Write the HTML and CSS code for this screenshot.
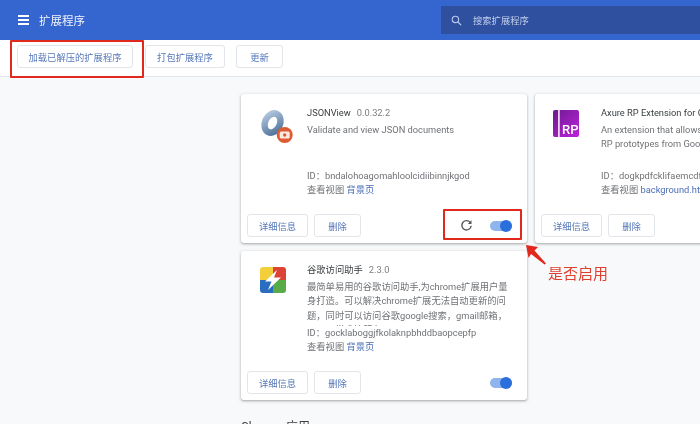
FILE: index.html
```html
<!DOCTYPE html>
<html lang="zh-CN">
<head>
    <meta charset="UTF-8">
    <meta name="viewport" content="width=device-width, initial-scale=1.0">
    <title>扩展程序</title>
    <link rel="stylesheet" href="styles.css">
</head>
<body>
    <div class="page">
        <header class="header">
            <div class="header-left">
                <div class="menu-icon"><span></span><span></span><span></span></div>
                <h1 class="header-title">扩展程序</h1>
            </div>
            <div class="search">
                <svg class="search-icon" viewBox="0 0 12 12" width="11" height="11">
                    <circle cx="4.8" cy="4.8" r="3.5" fill="none" stroke="#b9c9ee" stroke-width="1.2"/>
                    <path d="M7.4 7.4 L11 11" stroke="#b9c9ee" stroke-width="1.3"/>
                </svg>
                <span>搜索扩展程序</span>
            </div>
        </header>

        <div class="toolbar">
            <button class="btn btn-load">加载已解压的扩展程序</button>
            <button class="btn btn-pack">打包扩展程序</button>
            <button class="btn btn-update">更新</button>
        </div>

        <main class="content">
            <div class="cards">
                <section class="card">
                    <div class="card-main">
                        <svg class="card-icon" viewBox="0 0 36 36" width="36" height="36">
                            <defs>
                                <linearGradient id="ring" x1="0" y1="0" x2="1" y2="1">
                                    <stop offset="0" stop-color="#b4c8de"/>
                                    <stop offset="1" stop-color="#4f719b"/>
                                </linearGradient>
                            </defs>
                            <ellipse cx="18.5" cy="15" rx="7.5" ry="10" transform="rotate(25 18.5 15)" fill="none" stroke="url(#ring)" stroke-width="6.5"/>
                            <circle cx="30.7" cy="27" r="8" fill="#dd5b33"/>
                            <rect x="25.7" y="23.5" width="10" height="7" rx="1.5" fill="#fbe9e2"/>
                            <circle cx="30.7" cy="27" r="1.7" fill="#dd5b33"/>
                        </svg>
                        <div class="card-text">
                            <div class="card-title"><span class="name">JSONView</span><span class="version">0.0.32.2</span></div>
                            <div class="desc">Validate and view JSON documents</div>
                            <div class="ext-id">ID：bndalohoagomahloolcidiibinnjkgod</div>
                            <div class="views">查看视图 <a href="#">背景页</a></div>
                        </div>
                    </div>
                    <div class="card-actions">
                        <button class="btn btn-details">详细信息</button>
                        <button class="btn btn-remove">删除</button>
                        <div class="spacer"></div>
                        <svg class="reload" viewBox="0 0 14 14" width="13" height="13">
                            <path d="M11.3 4.2 A5 5 0 1 0 12 7.2" fill="none" stroke="#55585c" stroke-width="1.5"/>
                            <path d="M12.4 1.4 V5.4 H8.4 Z" fill="#55585c"/>
                        </svg>
                        <div class="toggle"><span class="knob"></span></div>
                    </div>
                </section>

                <section class="card">
                    <div class="card-main">
                        <svg class="card-icon" viewBox="0 0 36 36" width="36" height="36">
                            <defs>
                                <linearGradient id="rp" x1="0" y1="0" x2="1" y2="1">
                                    <stop offset="0" stop-color="#6a1b8f"/>
                                    <stop offset="1" stop-color="#c021dc"/>
                                </linearGradient>
                            </defs>
                            <rect x="5" y="2" width="26" height="27" rx="2" fill="url(#rp)"/>
                            <rect x="10" y="2" width="1.8" height="27" fill="#eed3f5"/>
                            <text x="14" y="25.5" class="rp-text">RP</text>
                        </svg>
                        <div class="card-text">
                            <div class="card-title"><span class="name">Axure RP Extension for Chrome</span></div>
                            <div class="desc">An extension that allows you to view Axure<br>RP prototypes from Google Chrome</div>
                            <div class="ext-id">ID：dogkpdfcklifaemcdfbildhcofnopogp</div>
                            <div class="views">查看视图 <a href="#">background.html</a></div>
                        </div>
                    </div>
                    <div class="card-actions">
                        <button class="btn btn-details">详细信息</button>
                        <button class="btn btn-remove">删除</button>
                    </div>
                </section>

                <section class="card">
                    <div class="card-main">
                        <svg class="card-icon" viewBox="0 0 36 36" width="36" height="36">
                            <g transform="translate(1 -3)">
                                <path d="M8 5 H18 V18 H5 V8 A3 3 0 0 1 8 5 Z" fill="#f4cf3c"/>
                                <path d="M18 5 H28 A3 3 0 0 1 31 8 V18 H18 Z" fill="#dd4237"/>
                                <path d="M5 18 H18 V31 H8 A3 3 0 0 1 5 28 Z" fill="#2a6cc0"/>
                                <path d="M18 18 H31 V28 A3 3 0 0 1 28 31 H18 Z" fill="#58ab47"/>
                                <path d="M22 8 L10 19.5 H16.5 L13 28 L26 15.5 H19 Z" fill="#fff"/>
                            </g>
                        </svg>
                        <div class="card-text">
                            <div class="card-title"><span class="name">谷歌访问助手</span><span class="version">2.3.0</span></div>
                            <div class="desc desc-long">最简单易用的谷歌访问助手,为chrome扩展用户量身打造。可以解决chrome扩展无法自动更新的问题，同时可以访问谷歌google搜索，gmail邮箱，google学术等服务。</div>
                            <div class="ext-id">ID：gocklaboggjfkolaknpbhddbaopcepfp</div>
                            <div class="views">查看视图 <a href="#">背景页</a></div>
                        </div>
                    </div>
                    <div class="card-actions">
                        <button class="btn btn-details">详细信息</button>
                        <button class="btn btn-remove">删除</button>
                        <div class="spacer"></div>
                        <div class="toggle"><span class="knob"></span></div>
                    </div>
                </section>
            </div>
            <h2 class="section-title">Chrome 应用</h2>
        </main>

        <!-- annotations drawn on top of the screenshot -->
        <div class="mark mark-load"></div>
        <div class="mark mark-toggle"></div>
        <svg class="arrow" viewBox="0 0 24 24" width="24" height="24">
            <path d="M1 1 L13 3 L9.5 6.5 L21 19.5 L19.5 20.5 L6 10 L3.5 14 Z" fill="#e0281c"/>
        </svg>
        <div class="note">是否启用</div>
    </div>
</body>
</html>
```

FILE: styles.css
```css
* {
    box-sizing: border-box;
}

html, body {
    margin: 0;
    height: 100%;
    overflow: hidden;
}

.page {
    position: relative;
    width: 700px;
    height: 424px;
    overflow: hidden;
    background-color: #f8f9fa;
    font-family: Roboto, "Noto Sans CJK SC", sans-serif;
    filter: blur(0.45px);
}

.header {
    display: flex;
    justify-content: space-between;
    align-items: center;
    height: 40px;
    background-color: #3566cf;
}

.header-left {
    display: flex;
    align-items: center;
    padding-left: 18px;
}

.menu-icon {
    display: flex;
    flex-direction: column;
    gap: 2.5px;
    width: 11px;
    margin-right: 10px;
}

.menu-icon span {
    height: 1.5px;
    background-color: #fff;
}

.header-title {
    margin: 0;
    font-size: 11.5px;
    font-weight: 400;
    color: #f0f4fc;
}

.search {
    display: flex;
    align-items: center;
    width: 259px;
    height: 28px;
    padding-left: 10px;
    background-color: #2f4f9f;
    font-size: 9.3px;
    color: #c3d0ec;
}

.search-icon {
    margin-right: 11px;
}

.toolbar {
    display: flex;
    align-items: center;
    height: 37px;
    padding: 0 0 3px 17px;
    background-color: #fff;
    border-bottom: 1px solid #e3e5e8;
}

.btn {
    height: 23px;
    padding: 0;
    background-color: #fff;
    border: 1px solid #e2e5e9;
    border-radius: 3px;
    font-family: inherit;
    font-size: 9.3px;
    color: #5577b8;
}

.btn-load {
    width: 116px;
    margin-right: 12px;
}

.btn-pack {
    width: 80px;
    margin-right: 11px;
}

.btn-update {
    width: 47px;
}

.content {
    padding: 17px 0 0 241px;
}

.cards {
    display: grid;
    grid-template-columns: repeat(2, 286px);
    grid-auto-rows: 149px;
    gap: 8px;
}

.card {
    display: flex;
    flex-direction: column;
    background-color: #fff;
    border-radius: 3px;
    box-shadow: 0 1px 2px rgba(60, 64, 67, 0.3), 0 1px 3px 1px rgba(60, 64, 67, 0.12);
}

.card-main {
    display: flex;
    flex: 1;
    min-height: 0;
    padding: 14px 0 0 13px;
}

.card-icon {
    flex: none;
    margin-right: 17px;
    overflow: visible;
}

.card-text {
    min-width: 0;
    padding-right: 12px;
    font-size: 9.3px;
    line-height: 14.4px;
    color: #6f7276;
}

.card-title {
    height: 14px;
    margin-top: -2px;
    white-space: nowrap;
}

.name {
    color: #3c4043;
    margin-right: 6px;
}

.version {
    color: #7b7e82;
}

.desc {
    height: 46px;
    margin-top: 3px;
    overflow: hidden;
    white-space: nowrap;
}

.desc-long {
    width: 203px;
    white-space: normal;
}

.ext-id {
    white-space: nowrap;
}

.views {
    white-space: nowrap;
}

.views a {
    color: #4a6db5;
    text-decoration: none;
}

.card-actions {
    display: flex;
    align-items: center;
    height: 35px;
    padding: 0 15px 0 6px;
}

.btn-details {
    width: 61px;
    margin-right: 6px;
}

.btn-remove {
    width: 47px;
}

.spacer {
    flex: 1;
}

.reload {
    margin-right: 17px;
}

.toggle {
    position: relative;
    width: 22px;
    height: 10px;
    background-color: #8fb4ee;
    border-radius: 5px;
}

.knob {
    position: absolute;
    top: -1px;
    right: 0;
    width: 12px;
    height: 12px;
    background-color: #2a6fdc;
    border-radius: 50%;
}

.rp-text {
    font-size: 13px;
    font-weight: 500;
    fill: #fff;
}

.section-title {
    margin: 17px 0 0;
    font-size: 12px;
    font-weight: 400;
    color: #3c4043;
}

.mark {
    position: absolute;
    border: 2px solid #e0281c;
    border-radius: 1px;
}

.mark-load {
    left: 10px;
    top: 40px;
    width: 134px;
    height: 38px;
}

.mark-toggle {
    left: 443px;
    top: 209px;
    width: 79px;
    height: 31px;
}

.arrow {
    position: absolute;
    left: 525px;
    top: 244px;
}

.note {
    position: absolute;
    left: 548px;
    top: 264px;
    font-size: 15px;
    line-height: 20px;
    color: #e0402f;
}
```
